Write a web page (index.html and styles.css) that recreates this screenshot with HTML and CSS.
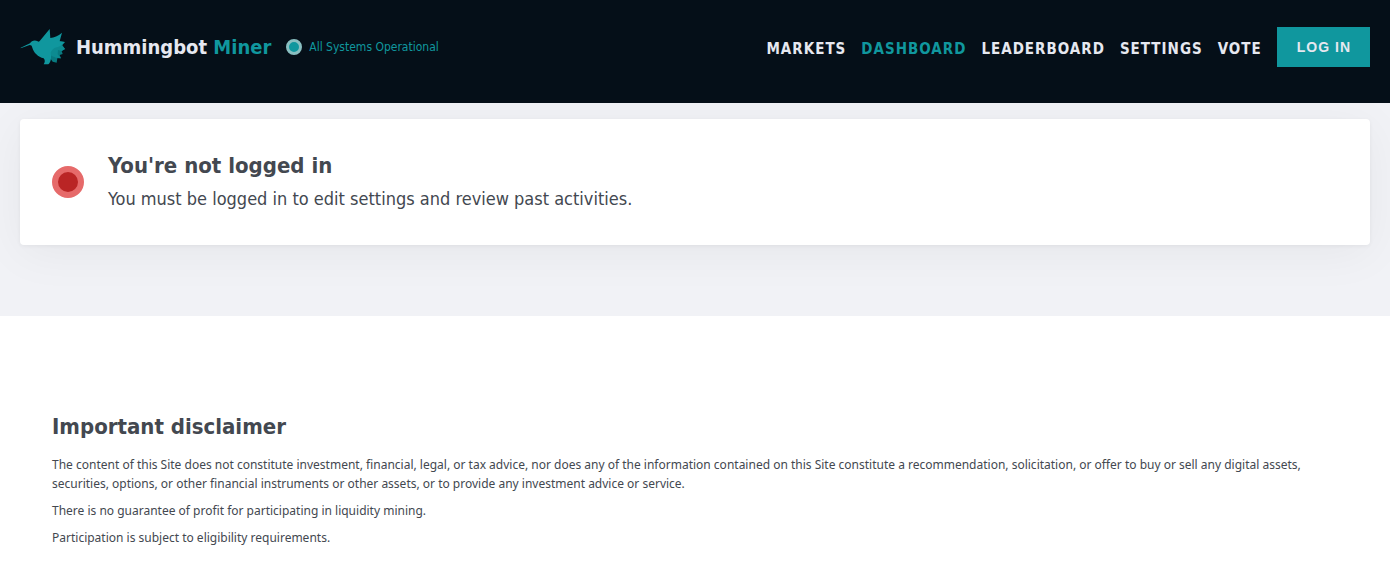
FILE: index.html
```html
<!DOCTYPE html>
<html lang="en">
<head>
<meta charset="utf-8">
<title>Hummingbot Miner</title>
<link rel="stylesheet" href="styles.css">
</head>
<body>
<header class="header">
  <a class="brand" href="#">
    <svg class="brand-logo" viewBox="14 20 138 108" aria-hidden="true">
      <path fill="#087a80" d="M108 60 L128 56 L148 59 L141 69 L149 80 L139 86 L142 95 L133 98 L137 108 L126 108 L124 121 L112 118 L96 96Z"/>
      <path fill="#0c8b91" d="M104 60 L140 69 L149 80 L139 86 L128 83 L127 96 L137 108 L122 106 L108 100 L96 84Z"/>
      <path fill="#10979e" d="M16 78 L16 76 L44 63 C48 54 60 52 67 57 C70 59 72 58 75 54 L103 20 L105 47 C116 46 128 41 140 31 L133 57 L149 59 C141 68 132 74 119 76 C112 80 108 84 106 91 C109 104 107 120 99 126 L85 126 C90 119 89 112 85 108 C68 103 55 91 51 76 C50 70 47 68 43 68Z"/>
    </svg>
    <span class="brand-name">Hummingbot <span class="brand-accent">Miner</span></span>
  </a>
  <a class="status" href="#"><span class="status-dot"></span>All Systems Operational</a>
  <nav class="nav">
    <a class="nav-link" href="#">MARKETS</a>
    <a class="nav-link nav-link-active" href="#">DASHBOARD</a>
    <a class="nav-link" href="#">LEADERBOARD</a>
    <a class="nav-link" href="#">SETTINGS</a>
    <a class="nav-link" href="#">VOTE</a>
    <button class="login" type="button">LOG IN</button>
  </nav>
</header>
<main class="main">
  <section class="notice">
    <span class="notice-dot"></span>
    <div>
      <h2 class="heading">You're not logged in</h2>
      <p class="notice-text">You must be logged in to edit settings and review past activities.</p>
    </div>
  </section>
</main>
<footer class="disclaimer">
  <h2 class="heading">Important disclaimer</h2>
  <div class="disclaimer-body">
    <p class="disclaimer-text">The content of this Site does not constitute investment, financial, legal, or tax advice, nor does any of the information contained on this Site constitute a recommendation, solicitation, or offer to buy or sell any digital assets, securities, options, or other financial instruments or other assets, or to provide any investment advice or service.</p>
    <p class="disclaimer-text">There is no guarantee of profit for participating in liquidity mining.</p>
    <p class="disclaimer-text">Participation is subject to eligibility requirements.</p>
  </div>
</footer>
</body>
</html>
```
FILE: styles.css
```css
* {
  box-sizing: border-box;
}

body {
  margin: 0;
  background: #fff;
  color: #434850;
  font-family: Tahoma, "DejaVu Sans Condensed", "Noto Sans", sans-serif;
}

h2,
p {
  margin: 0;
}

a {
  text-decoration: none;
}

.header {
  display: flex;
  align-items: center;
  gap: 15px;
  padding: 27px 20px 36px;
  background: #050f18;
}

.brand {
  display: flex;
  align-items: center;
  gap: 10px;
  color: #e6e8f0;
}

.brand-logo {
  width: 46px;
  height: 36px;
}

.brand-name {
  font-size: 20px;
  font-weight: 700;
  line-height: 24px;
}

.brand-accent {
  color: #10979e;
}

.status {
  display: flex;
  align-items: center;
  gap: 7px;
  color: #10979e;
  font-size: 12px;
  line-height: 16px;
}

.status-dot {
  width: 16px;
  height: 16px;
  border: 3px solid #89bfc1;
  border-radius: 50%;
  background: #10979e;
}

.nav {
  display: flex;
  align-items: center;
  gap: 15px;
  margin-left: auto;
}

.nav-link {
  padding-top: 4px;
  color: #e6e8f0;
  font-size: 15px;
  font-weight: 700;
  line-height: 18px;
  letter-spacing: 1px;
}

.nav-link-active {
  color: #10979e;
}

.login {
  height: 40px;
  padding: 0 19px 0 20px;
  border: 0;
  background: #10979e;
  color: #e6e8f0;
  font: 700 14px/40px "Liberation Sans", Arial, sans-serif;
  letter-spacing: 1px;
}

.main {
  padding: 16px 20px 71px;
  overflow: hidden;
  background: #f1f2f6;
}

.notice {
  display: flex;
  align-items: center;
  gap: 24px;
  padding: 32px;
  border-radius: 4px;
  background: #fff;
  box-shadow: 0 8px 48px rgba(5, 15, 24, 0.05), 0 1px 4px rgba(5, 15, 24, 0.05);
}

.notice-dot {
  width: 32px;
  height: 32px;
  border: 6px solid #e66a6a;
  border-radius: 50%;
  background: #ba2525;
}

.heading {
  font-size: 22px;
  font-weight: 700;
  line-height: 30px;
}

.notice-text {
  margin-top: 4px;
  font-size: 18px;
  line-height: 28px;
}

.disclaimer {
  padding: 96px 52px 16px;
}

.disclaimer-body {
  display: flex;
  flex-direction: column;
  gap: 8px;
  margin-top: 13px;
}

.disclaimer-text {
  font-family: Tahoma, "Noto Sans", sans-serif;
  font-size: 12px;
  line-height: 19px;
}
```
